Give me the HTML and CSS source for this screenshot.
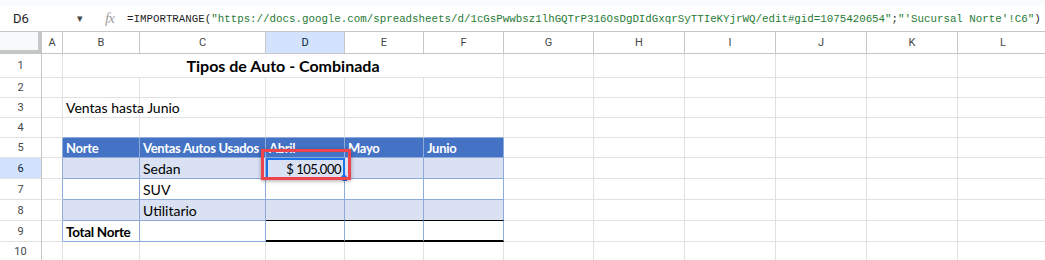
FILE: index.html
```html
<!DOCTYPE html>
<html lang="es">
<head>
    <meta charset="UTF-8">
    <title>Tipos de Auto - Combinada</title>
    <link rel="stylesheet" href="styles.css">
</head>
<body>

    <div class="top-band"></div>

    <!-- Formula bar -->
    <div class="formula-bar">
        <div class="name-box">D6</div>
        <div class="name-caret">&#9662;</div>
        <div class="fx">fx</div>
        <div class="formula">=IMPORTRANGE(<span class="str">"https://docs.google.com/spreadsheets/d/1cGsPwwbsz1lhGQTrP316OsDgDIdGxqrSyTTIeKYjrWQ/edit#gid=1075420654"</span>;<span class="str">"'Sucursal Norte'!C6"</span>)</div>
    </div>

    <!-- Sheet grid -->
    <div class="sheet-wrap">
    <div class="sheet">
        <div class="corner"></div>
        <div class="ch">A</div><div class="ch">B</div><div class="ch">C</div><div class="ch active">D</div><div class="ch">E</div><div class="ch">F</div><div class="ch">G</div><div class="ch">H</div><div class="ch">I</div><div class="ch">J</div><div class="ch">K</div><div class="ch">L</div>

        <div class="rh">1</div>
        <div class="c"></div><div class="c title">Tipos de Auto - Combinada</div><div class="c"></div><div class="c"></div><div class="c"></div><div class="c"></div><div class="c"></div><div class="c"></div>

        <div class="rh">2</div>
        <div class="c"></div><div class="c"></div><div class="c"></div><div class="c"></div><div class="c"></div><div class="c"></div><div class="c"></div><div class="c"></div><div class="c"></div><div class="c"></div><div class="c"></div><div class="c"></div>

        <div class="rh">3</div>
        <div class="c"></div><div class="c text overflow">Ventas hasta Junio</div><div class="c"></div><div class="c"></div><div class="c"></div><div class="c"></div><div class="c"></div><div class="c"></div><div class="c"></div><div class="c"></div><div class="c"></div><div class="c"></div>

        <div class="rh">4</div>
        <div class="c"></div><div class="c under"></div><div class="c under"></div><div class="c under"></div><div class="c under"></div><div class="c under"></div><div class="c"></div><div class="c"></div><div class="c"></div><div class="c"></div><div class="c"></div><div class="c"></div>

        <div class="rh">5</div>
        <div class="c edge"></div><div class="c thead">Norte</div><div class="c thead">Ventas Autos Usados</div><div class="c thead">Abril</div><div class="c thead">Mayo</div><div class="c thead last">Junio</div><div class="c"></div><div class="c"></div><div class="c"></div><div class="c"></div><div class="c"></div><div class="c"></div>

        <div class="rh active">6</div>
        <div class="c edge"></div><div class="c band"></div><div class="c band text">Sedan</div><div class="c band num selected">$ 105.000</div><div class="c band"></div><div class="c band last"></div><div class="c"></div><div class="c"></div><div class="c"></div><div class="c"></div><div class="c"></div><div class="c"></div>

        <div class="rh">7</div>
        <div class="c edge"></div><div class="c row"></div><div class="c row text">SUV</div><div class="c row"></div><div class="c row"></div><div class="c row last"></div><div class="c"></div><div class="c"></div><div class="c"></div><div class="c"></div><div class="c"></div><div class="c"></div>

        <div class="rh">8</div>
        <div class="c edge"></div><div class="c band"></div><div class="c band text">Utilitario</div><div class="c band total-top"></div><div class="c band total-top"></div><div class="c band last total-top"></div><div class="c"></div><div class="c"></div><div class="c"></div><div class="c"></div><div class="c"></div><div class="c"></div>

        <div class="rh">9</div>
        <div class="c edge"></div><div class="c row text bold">Total Norte</div><div class="c row"></div><div class="c row total"></div><div class="c row total"></div><div class="c row last total"></div><div class="c"></div><div class="c"></div><div class="c"></div><div class="c"></div><div class="c"></div><div class="c"></div>

        <div class="rh">10</div>
        <div class="c"></div><div class="c"></div><div class="c"></div><div class="c"></div><div class="c"></div><div class="c"></div><div class="c"></div><div class="c"></div><div class="c"></div><div class="c"></div><div class="c"></div><div class="c"></div>
    </div>

    <!-- Red callout around D6 -->
    <div class="callout"></div>
    </div>

</body>
</html>
```

FILE: styles.css
```css
body {
    margin: 0;
    padding: 0;
    background-color: #ffffff;
    font-family: Roboto, Arial, sans-serif;
    overflow: hidden;
}

.top-band {
    height: 6px;
    background-color: #f9fbfd;
}

.formula-bar {
    display: flex;
    align-items: center;
    height: 25px;
    border-bottom: 1px solid #c4c7c5;
    background-color: #ffffff;
}

.name-box {
    width: 64px;
    padding-left: 13px;
    font-size: 13px;
    color: #1f1f1f;
}

.name-caret {
    width: 28px;
    font-size: 11px;
    color: #444746;
}

.fx {
    width: 22px;
    font-family: "Liberation Serif", serif;
    font-style: italic;
    font-size: 15px;
    color: #a0a0a0;
    letter-spacing: -1px;
}

.formula {
    font-family: "Liberation Mono", monospace;
    font-size: 10.8px;
    color: #1f1f1f;
    white-space: nowrap;
}

.formula .str {
    color: #277a35;
}

/* Grid */
.sheet-wrap {
    position: relative;
}

.sheet {
    display: grid;
    grid-template-columns: 42px 21px 77px 126px 79px 79px 80px 90px 91px 91px 91px 91px 91px;
    grid-template-rows: 22px 24px 20px 20px 20px 20px 21px 21px 21px 21px 20px;
    font-family: Lato, "Open Sans", sans-serif;
    font-size: 14px;
}

.sheet > div {
    box-sizing: border-box;
    border-right: 1px solid #e1e1e1;
    border-bottom: 1px solid #e1e1e1;
    overflow: visible;
    white-space: nowrap;
}

.corner {
    background-color: #f8f9fa;
    border-right: 4px solid #c4c7c5 !important;
    border-bottom: 4px solid #c4c7c5 !important;
}

.ch {
    display: flex;
    align-items: center;
    justify-content: center;
    font-family: Roboto, Arial, sans-serif;
    font-size: 11px;
    color: #444746;
    border-right: 1px solid #c4c7c5 !important;
    border-bottom: 1px solid #c4c7c5 !important;
}

.rh {
    display: flex;
    align-items: center;
    justify-content: center;
    font-family: Roboto, Arial, sans-serif;
    font-size: 11px;
    color: #444746;
    border-right: 1px solid #c4c7c5 !important;
    border-bottom: 1px solid #e1e1e1;
}

.ch.active,
.rh.active {
    background-color: #d3e3fd;
    color: #0b1f44;
}

.c {
    display: flex;
    align-items: flex-end;
    padding: 0 3px 1px;
    color: #000000;
}

.title {
    grid-column: span 5;
    justify-content: center;
    align-items: center;
    font-weight: bold;
    font-size: 16px;
}

.under {
    border-bottom-color: #8eaadb !important;
}

.edge {
    border-right-color: #8eaadb !important;
}

.thead {
    background-color: #4472c4;
    color: #ffffff;
    font-weight: bold;
    font-size: 13px;
    letter-spacing: -0.3px;
    border-right-color: #8eaadb !important;
    border-bottom-color: #8eaadb !important;
}

.band {
    background-color: #d9e1f2;
    border-right-color: #8eaadb !important;
    border-bottom-color: #8eaadb !important;
}

.row {
    background-color: #ffffff;
    border-right-color: #8eaadb !important;
    border-bottom-color: #8eaadb !important;
}

.num {
    justify-content: flex-end;
    font-size: 13px;
    letter-spacing: -0.5px;
}

.bold {
    font-weight: bold;
    font-size: 13.5px;
    letter-spacing: -0.3px;
}

.total-top {
    border-bottom-color: #000000 !important;
}

.total {
    border-bottom: 2px solid #000000 !important;
}

.selected {
    position: relative;
    outline: 2px solid #1a73e8;
    outline-offset: -2px;
}

.selected::after {
    content: "";
    position: absolute;
    right: -3px;
    bottom: -3px;
    width: 6px;
    height: 6px;
    border-radius: 50% 50% 0 50%;
    background-color: #1a73e8;
}

.callout {
    position: absolute;
    left: 261px;
    top: 117px;
    width: 90px;
    height: 31px;
    box-sizing: border-box;
    border: 3px solid #f0444c;
    box-shadow: 0 1px 4px rgba(0, 0, 0, 0.35);
}
```
